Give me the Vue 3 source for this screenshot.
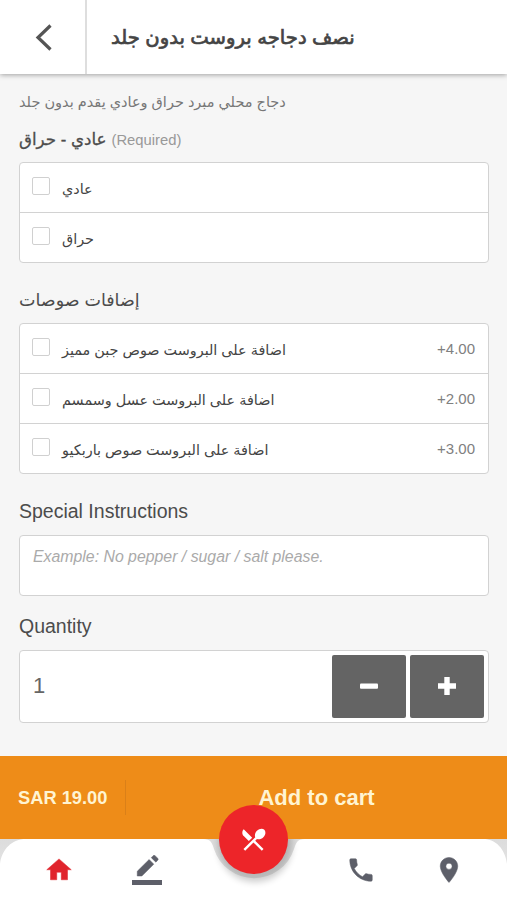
<script setup>
import { ref } from 'vue'

const title = 'نصف دجاجه بروست بدون جلد'
const description = 'دجاج محلي مبرد حراق وعادي يقدم بدون جلد'

const groups = [
  {
    key: 'type',
    title: 'عادي - حراق',
    required: true,
    options: [
      { id: 1, name: 'عادي' },
      { id: 2, name: 'حراق' }
    ]
  },
  {
    key: 'sauces',
    title: 'إضافات صوصات',
    required: false,
    options: [
      { id: 3, name: 'اضافة على البروست صوص جبن مميز', price: '+4.00' },
      { id: 4, name: 'اضافة على البروست عسل وسمسم', price: '+2.00' },
      { id: 5, name: 'اضافة على البروست صوص باربكيو', price: '+3.00' }
    ]
  }
]

const selected = ref([])
const instructions = ref('')
const quantity = ref(1)

function changeQuantity(step) {
  quantity.value = Math.max(1, quantity.value + step)
}
</script>

<template>
  <div class="page">
    <header class="header">
      <button class="back-btn" aria-label="Back">
        <svg width="18" height="28" viewBox="0 0 18 28">
          <path d="M16.5 2.5 4 14.5 16.5 26.5" fill="none" stroke="#555" stroke-width="3.2" />
        </svg>
      </button>
      <h1 class="title" dir="rtl">{{ title }}</h1>
    </header>

    <main class="content">
      <p class="description"><span dir="rtl">{{ description }}</span></p>

      <section v-for="group in groups" :key="group.key" class="group" :class="group.key">
        <h2 class="heading arabic">
          <span dir="rtl">{{ group.title }}</span>
          <small v-if="group.required">(Required)</small>
        </h2>
        <div class="options">
          <label v-for="option in group.options" :key="option.id" class="option">
            <input v-model="selected" type="checkbox" :value="option.id" class="checkbox" />
            <span class="option-name" dir="rtl">{{ option.name }}</span>
            <span v-if="option.price" class="price">{{ option.price }}</span>
          </label>
        </div>
      </section>

      <h2 class="heading">Special Instructions</h2>
      <textarea
        v-model="instructions"
        class="instructions"
        placeholder="Example: No pepper / sugar / salt please."
      ></textarea>

      <h2 class="heading quantity-heading">Quantity</h2>
      <div class="quantity">
        <span class="quantity-value">{{ quantity }}</span>
        <button class="step-btn" aria-label="Decrease" @click="changeQuantity(-1)">
          <svg width="20" height="20" viewBox="0 0 20 20">
            <rect x="1" y="7.5" width="18" height="5.2" rx="1" fill="#fff" />
          </svg>
        </button>
        <button class="step-btn" aria-label="Increase" @click="changeQuantity(1)">
          <svg width="20" height="20" viewBox="0 0 20 20">
            <path d="M7.3 1h5.4v6.3H19v5.4h-6.3V19H7.3v-6.3H1V7.3h6.3z" fill="#fff" />
          </svg>
        </button>
      </div>
    </main>

    <div class="cart-bar">
      <span class="total">SAR 19.00</span>
      <button class="add-btn">Add to cart</button>
    </div>

    <nav class="nav">
      <!-- White sheet with a notch for the round button -->
      <svg class="nav-bg" width="507" height="61" viewBox="0 0 507 61">
        <defs>
          <linearGradient id="shade" x1="0" y1="0" x2="0" y2="1">
            <stop offset="0" stop-color="#dcdcdc" />
            <stop offset="0.6" stop-color="#e6e6e6" />
          </linearGradient>
          <filter id="soft" x="-30%" y="-30%" width="160%" height="160%">
            <feGaussianBlur stdDeviation="3.5" />
          </filter>
        </defs>
        <rect width="507" height="61" fill="url(#shade)" />
        <path d="M0 61V25C2 10 12 0 26 0H203C211 0 212 4 214 10A42 42 0 0 0 294 10C296 4 297 0 305 0H483C496 0 505 10 507 25V61Z" fill="#fff" />
        <circle cx="255" cy="6" r="37" fill="#000" opacity="0.2" filter="url(#soft)" />
      </svg>
      <a class="nav-item active" href="#" aria-label="Home">
        <svg viewBox="0 0 24 24"><path d="M10.2 19.8v-6h3.6v6h5v-8h3L12 3.1 2.2 11.8h3v8z" /></svg>
      </a>
      <a class="nav-item" href="#" aria-label="Edit">
        <svg viewBox="0 0 24 24">
          <path d="M17.4 7.3 13.7 3.6 4.2 13V16.8h3.7zM20.7 4c.35-.35.35-.95 0-1.3L18.4.5c-.4-.4-1-.4-1.4 0L15.4 2.1 19.1 5.7z" />
          <path class="line" d="M0 20h24v4H0z" />
        </svg>
      </a>
      <a class="nav-item nav-right" href="#" aria-label="Call">
        <svg viewBox="0 0 24 24">
          <path d="M6.62 10.79c1.44 2.83 3.76 5.14 6.59 6.59l2.2-2.2c.27-.27.67-.36 1.02-.24 1.12.37 2.33.57 3.57.57.55 0 1 .45 1 1V20c0 .55-.45 1-1 1-9.39 0-17-7.61-17-17 0-.55.45-1 1-1h3.5c.55 0 1 .45 1 1 0 1.25.2 2.45.57 3.57.11.35.03.74-.25 1.02l-2.2 2.2z" />
        </svg>
      </a>
      <a class="nav-item" href="#" aria-label="Location">
        <svg viewBox="0 0 24 24">
          <path d="M12 2C8.13 2 5 5.13 5 9c0 5.25 7 13 7 13s7-7.75 7-13c0-3.87-3.13-7-7-7zm0 9.5a2.5 2.5 0 0 1 0-5 2.5 2.5 0 0 1 0 5z" />
        </svg>
      </a>
      <button class="menu-btn" aria-label="Menu">
        <svg width="29" height="29" viewBox="0 0 24 24" fill="#fff">
          <path d="M8.1 13.34l2.83-2.83L3.91 3.5c-1.56 1.56-1.56 4.09 0 5.66l4.19 4.18zm6.78-1.81c1.53.71 3.68.21 5.27-1.38 1.91-1.91 2.28-4.65.81-6.12-1.46-1.46-4.2-1.1-6.12.81-1.59 1.59-2.09 3.74-1.38 5.27L3.7 19.87l1.41 1.41L12 14.41l6.88 6.88 1.41-1.41L13.41 13l1.47-1.47z" />
        </svg>
      </button>
    </nav>
  </div>
</template>

<style>
body {
  margin: 0;
  background: #f6f6f6;
}
</style>

<style scoped>
.page {
  display: flex;
  flex-direction: column;
  width: 507px;
  height: 900px;
  overflow: hidden;
  background: #f6f6f6;
  color: #4c4c4c;
  font-family: "Liberation Sans", "DejaVu Sans", sans-serif;
}

button {
  padding: 0;
  border: 0;
  font-family: inherit;
  cursor: pointer;
}

.header {
  display: flex;
  flex: none;
  height: 74px;
  background: #fff;
  box-shadow: 0 1px 5px rgba(0, 0, 0, 0.35);
}

.back-btn {
  display: flex;
  align-items: center;
  justify-content: center;
  box-sizing: border-box;
  width: 87px;
  border-right: 2px solid #dedede;
  background: transparent;
}

.title {
  margin: 0 0 0 24px;
  color: #444;
  font-size: 19.6px;
  font-weight: normal;
  line-height: 75px;
  white-space: nowrap;
  -webkit-text-stroke: 0.7px #444;
}

.content {
  flex: 1;
  padding: 16px 18px 0 19px;
}

.description {
  height: 24px;
  margin: 0;
  color: #777;
  font-size: 14.5px;
  line-height: 24px;
  white-space: nowrap;
}

.heading {
  height: 24px;
  margin: 0 0 12px;
  font-size: 19.5px;
  font-weight: normal;
  line-height: 24px;
  white-space: nowrap;
}

.heading.arabic {
  margin-bottom: 11px;
  font-size: 17.5px;
}

.type .heading.arabic {
  font-size: 16.7px;
  line-height: 26px;
  -webkit-text-stroke: 0.3px #4c4c4c;
}

.heading small {
  margin-left: 5px;
  color: #999;
  font-size: 14.8px;
  -webkit-text-stroke: 0;
}

.heading span {
  display: inline-block;
}

.group {
  margin-bottom: 25px;
}

.group.type {
  margin-top: 13px;
}

.options {
  border: 1px solid #d2d2d2;
  border-radius: 4px;
  background: #fff;
}

.option {
  display: flex;
  align-items: center;
  box-sizing: border-box;
  height: 49px;
  padding: 0 13px 0 12px;
}

.option + .option {
  height: 50px;
  border-top: 1px solid #d2d2d2;
}

.checkbox {
  flex: none;
  box-sizing: border-box;
  width: 18px;
  height: 18px;
  margin: 0 12px 3px 0;
  border: 1.5px solid #d0d0d0;
  border-radius: 2px;
  background: #fff;
  appearance: none;
}

.checkbox:checked {
  background: #ee8c18;
}

.option-name {
  padding-top: 2px;
  color: #444;
  font-size: 14.4px;
  white-space: nowrap;
}

.price {
  margin-left: auto;
  padding-bottom: 1px;
  color: #808080;
  font-size: 15px;
}

.instructions {
  display: block;
  box-sizing: border-box;
  width: 100%;
  height: 61px;
  padding: 12px 13px;
  border: 1px solid #d2d2d2;
  border-radius: 4px;
  outline: 0;
  background: #fff;
  font-family: inherit;
  font-size: 15.85px;
  resize: none;
}

.instructions::placeholder {
  color: #aaa;
  font-style: italic;
}

.quantity-heading {
  margin-top: 18px;
}

.quantity {
  display: flex;
  gap: 4px;
  box-sizing: border-box;
  height: 73px;
  padding: 4px;
  border: 1px solid #d2d2d2;
  border-radius: 4px;
  background: #fff;
}

.quantity-value {
  flex: 1;
  padding-left: 9px;
  color: #666;
  font-size: 22px;
  line-height: 62px;
}

.step-btn {
  display: flex;
  align-items: center;
  justify-content: center;
  width: 74px;
  padding-bottom: 2px;
  border-radius: 2px;
  background: #646464;
}

.cart-bar {
  display: flex;
  flex: none;
  align-items: center;
  height: 83px;
  background: #ee8c18;
  color: #fff4d2;
  font-weight: bold;
}

.total {
  box-sizing: border-box;
  width: 126px;
  padding-left: 18px;
  border-right: 1px solid #da8018;
  font-size: 18.3px;
  line-height: 35px;
  white-space: nowrap;
}

.add-btn {
  flex: 1;
  background: transparent;
  color: inherit;
  font-size: 22px;
  font-weight: bold;
}

.nav {
  position: relative;
  display: flex;
  flex: none;
  gap: 58px;
  box-sizing: border-box;
  height: 61px;
  padding: 16px 0 0 44px;
}

.nav-bg {
  position: absolute;
  top: 0;
  left: 0;
}

.nav-item {
  position: relative;
  width: 30px;
  height: 30px;
  color: #5d5f69;
}

.nav-item svg {
  display: block;
  fill: currentColor;
  stroke: currentColor;
  stroke-width: 0.4;
}

.nav-item .line {
  stroke: none;
}

.nav-item.active {
  color: #e0242c;
}

.nav-right {
  margin-left: 126px;
}

.menu-btn {
  position: absolute;
  top: -34px;
  left: 219px;
  display: flex;
  align-items: center;
  justify-content: center;
  width: 69px;
  height: 69px;
  border-radius: 50%;
  background: #ed2529;
}
</style>
